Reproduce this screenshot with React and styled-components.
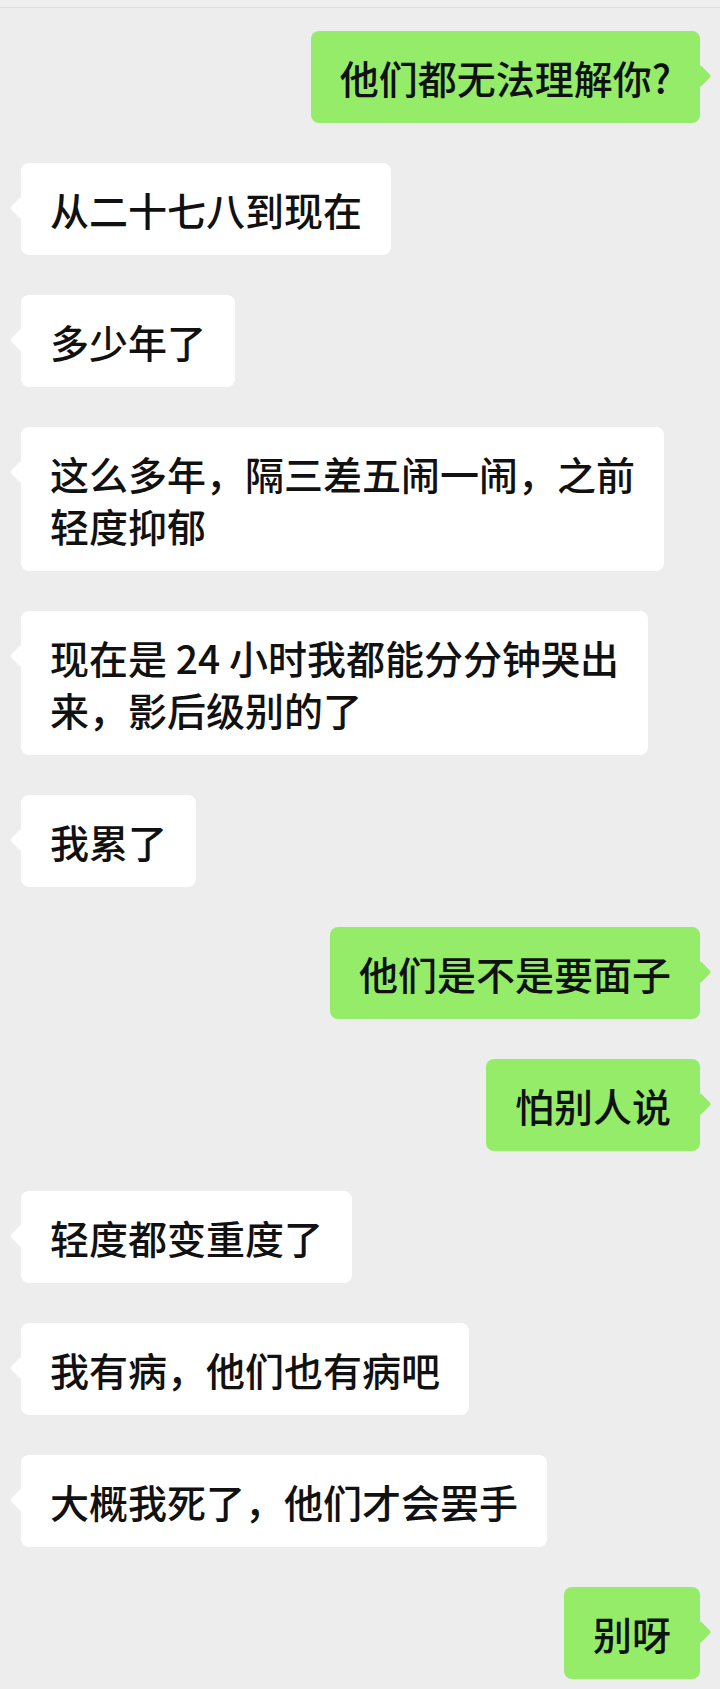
import { Fragment } from 'react';
import styled, { createGlobalStyle } from 'styled-components';

const GlobalStyle = createGlobalStyle`
    html, body {
        margin: 0;
        padding: 0;
        background-color: #EDEDED;
    }
    body {
        font-family: "Noto Sans CJK SC", "Noto Sans", sans-serif;
    }
`;

const Page = styled.div`
    min-height: 1689px;
    background-color: #EDEDED;
`;

const TopBar = styled.div`
    height: 7px;
    background-color: #EFEFEF;
    border-bottom: 1px solid #DDDDDD;
`;

const ChatList = styled.div`
    display: flex;
    flex-direction: column;
    gap: 40px;
    padding: 23px 20px 10px 21px;
`;

const Row = styled.div`
    display: flex;
    justify-content: ${(props) => (props.$mine ? 'flex-end' : 'flex-start')};
`;

const Bubble = styled.div`
    position: relative;
    box-sizing: border-box;
    padding: 20px 29px;
    font-size: 39px;
    line-height: 52px;
    font-weight: 500;
    color: #111;
    white-space: nowrap;
    background-color: ${(props) => (props.$mine ? '#95EC69' : '#FFFFFF')};
    border-radius: 8px;

    &::before {
        content: '';
        position: absolute;
        top: 37px;
        ${(props) => (props.$mine ? 'right: -8px;' : 'left: -8px;')}
        width: 16px;
        height: 16px;
        background-color: inherit;
        border-radius: 2px;
        transform: rotate(45deg);
    }
`;

const messages = [
    { mine: true, lines: ['他们都无法理解你?'] },
    { mine: false, lines: ['从二十七八到现在'] },
    { mine: false, lines: ['多少年了'] },
    { mine: false, lines: ['这么多年，隔三差五闹一闹，之前', '轻度抑郁'] },
    { mine: false, lines: ['现在是 24 小时我都能分分钟哭出', '来，影后级别的了'] },
    { mine: false, lines: ['我累了'] },
    { mine: true, lines: ['他们是不是要面子'] },
    { mine: true, lines: ['怕别人说'] },
    { mine: false, lines: ['轻度都变重度了'] },
    { mine: false, lines: ['我有病，他们也有病吧'] },
    { mine: false, lines: ['大概我死了，他们才会罢手'] },
    { mine: true, lines: ['别呀'] },
];

const App = () => {
    return(
        <Page>
            <GlobalStyle />
            <TopBar />
            <ChatList>
                {messages.map((msg, i) => (
                    <Row key={i} $mine={msg.mine}>
                        <Bubble $mine={msg.mine}>
                            {msg.lines.map((line, j) => (
                                <Fragment key={j}>
                                    {j > 0 && <br />}
                                    {line}
                                </Fragment>
                            ))}
                        </Bubble>
                    </Row>
                ))}
            </ChatList>
        </Page>
    );
}
export default App;
